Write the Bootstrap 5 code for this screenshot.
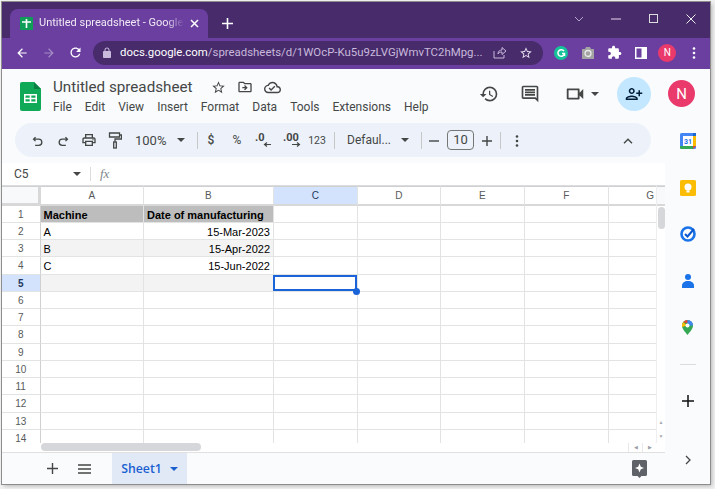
<!DOCTYPE html>
<html lang="en">
<head>
<meta charset="utf-8">
<title>Untitled spreadsheet</title>
<link rel="stylesheet" href="https://cdn.jsdelivr.net/npm/bootstrap@5.3.0/dist/css/bootstrap.min.css">
<style>
html,body{height:100%;margin:0;overflow:hidden;background:#f1f1f1;font-family:"Open Sans","Liberation Sans",sans-serif}
.win{width:708px;height:482px;margin:2px 0 0 2px;box-shadow:0 0 0 1px #8d8d8d,2px 2px 4px rgba(0,0,0,.25);background:#f9fbfd;display:flex;flex-direction:column;overflow:hidden}
.tabstrip{height:36px;flex:none;background:#472b6b;padding:7px 0 0 8px;color:#fff}
.tabx{width:198px;height:29px;background:#6b3fa0;border-radius:8px 8px 0 0;padding:0 9px 0 10px;font-size:12px;color:#efe9f5;white-space:nowrap}
.tabname{width:145px;margin-left:6px;overflow:hidden;font-family:"Roboto",sans-serif;font-size:11px;flex:none;-webkit-mask-image:linear-gradient(90deg,#000 88%,transparent);mask-image:linear-gradient(90deg,#000 88%,transparent)}
.favi{width:13px;height:13px;flex:none}
.newtab{width:38px;height:29px}
.wctls{height:17px}
.wctl{width:37.5px}
.chrome{height:31px;flex:none;background:#6b3fa0;padding:0 0 2px 6px}
.nb{width:27px}
.omni{width:450px;height:24px;margin:0 5px 0 4px;background:#472b6b;border-radius:12px;padding:0 8px;color:#fff;font-family:"Roboto",sans-serif;font-size:11.4px;white-space:nowrap;flex:none}
.omni i{font-style:normal;color:#c9b9dc}
.omtxt{margin-left:7px;flex:none}
.om-share{margin-right:12px}
.om-star{margin-right:2px}
.extb{width:26.5px}
.ava-s{width:18px;height:18px;border-radius:50%;background:#ea3a6c;color:#fff;font:10px "Roboto",sans-serif}
.dochead{height:54px;flex:none;background:#f9fbfd;padding:0 0 0 18px}
.dlogo{width:21px;height:29px;margin-right:12px;flex:none;margin-top:13px}
.dtitle{font:15.2px/20px "Roboto",sans-serif;color:#444746;margin-top:8px;height:20px;white-space:nowrap}
.dtitle svg{margin-left:11px}
.dtitle svg:first-of-type{margin-left:19px}
.dmenu{font:12px/16px "Roboto",sans-serif;color:#444746;gap:13px;margin-top:2px}
.hdr-right{height:49px}
.hr-ic{width:41px}
.hr-vid{width:56px;padding-left:14px}
.hr-caret{margin-left:5px}
.sharec{width:34px;height:34px;border-radius:50%;background:#c2e7ff;margin-left:11px}
.ava-l{width:27px;height:27px;border-radius:50%;background:#ea3a6c;color:#fff;font:15px "Roboto",sans-serif;margin:0 15px 0 17px}
.pillwrap{height:40px;flex:none;padding:0 0 6px 13px}
.pill{width:636px;height:34px;background:#edf2fa;border-radius:17px;padding:0 0 0 9px;color:#444746;font:13px "Roboto",sans-serif;white-space:nowrap}
.tb{width:26px;flex:none;text-align:center}
.tb-n{width:24px}
.tb-s{width:22px;font-size:10.5px}
.tb-sm{font-size:12px}
.tsep{width:1px;height:17px;background:#c7c7c7;flex:none}
.sep-6{margin-left:6px}
.zoombox{width:69px;padding-left:7px}
.fontbox{width:86px;padding-left:12px;font-size:12px}
.caret-in{margin-left:auto;margin-right:12px}
.fsize{width:27px;height:20px;border:1px solid #747775;border-radius:4px;line-height:18px;text-align:center;flex:none;margin-left:1px}
.keb{margin-left:3px}
.chev{margin-left:auto;margin-right:10px}
.caret-d{width:0;height:0;border-left:4px solid transparent;border-right:4px solid transparent;border-top:4px solid #444746;display:inline-block}
.workarea{flex:1;min-height:0}
.maincol{width:663px;flex:none;background:#fff}
.fbar{height:23px;flex:none;background:#fff;border-bottom:1px solid #dadce0;font:12px "Roboto",sans-serif;color:#444746}
.nbox{width:88px;padding:0 9px 0 12px}
.fdiv{width:1px;height:14px;background:#dadce0}
.fxt{font:italic 13px "Liberation Serif",serif;color:#80868b;margin-left:9px}
.gridbox{height:257px;flex:none;position:relative;overflow:hidden}
.sgrid{width:691px;table-layout:fixed;border-collapse:separate;border-spacing:0;font:11px "Liberation Sans",sans-serif;color:#000}
.c0{width:39px}.ca{width:103px}.cb{width:130px}.cc{width:84px}.cd{width:83px}.ce{width:84px}.cf{width:84px}.cg{width:84px}
.sgrid td,.sgrid th{height:17px;padding:1px 3px 0 2.5px;border-right:1px solid #e2e3e3;border-bottom:1px solid #e2e3e3;overflow:hidden;white-space:nowrap;font-weight:400;line-height:14px}
.sgrid td.text-end{padding-right:3px}
.sgrid td.hcell+td.hcell{padding-left:3px}
.sgrid tbody tr:nth-child(4n) td,.sgrid tbody tr:nth-child(4n) th{height:18px}
.sgrid thead th{height:20px;padding-top:0;background:#fff;text-align:center;color:#575a5a;font-size:10px;border-top:1px solid #d0d0d0;border-bottom:2px solid #d8d8d8}
.sgrid tbody th{background:#fff;color:#575a5a;text-align:center;font-size:10px;border-right:1px solid #d0d0d0}
.sgrid thead th.cnr{background:#f8f9fa;border-right:3px solid #d8d8d8;border-bottom:3px solid #d8d8d8}
.sgrid thead th.selh,.sgrid tbody th.selh{background:#d3e3fd;color:#23385c}
.sgrid tbody th.selh{font-weight:700}
.sgrid td.hcell{background:#bdbdbd;font-weight:700}
.sgrid td.rowg{background:#f3f3f3}
.sgrid td.cur{position:relative;overflow:visible}
.curbox{position:absolute;left:-1px;top:0;right:0;bottom:0;border:2px solid #1a63d8}
.fillh{position:absolute;right:-3px;bottom:-4px;width:7px;height:7px;border-radius:50%;background:#1a63d8}
.vscroll{position:absolute;right:0;top:0;bottom:0;width:9px;background:#fff;border-left:1px solid #eee}
.vhead{height:20px;background:#f8f9fa;border-top:1px solid #d0d0d0;border-bottom:2px solid #d8d8d8}
.vthumb{position:absolute;left:1px;top:21px;width:7px;height:22px;background:#d5d7da;border-radius:4px}
.varrow{position:absolute;left:0;width:8px;text-align:center;color:#a8adb3;font-size:5px;line-height:8px}
.va-up{bottom:17px}
.va-dn{bottom:3px}
.hscroll{height:10px;flex:none;background:#fff;border-bottom:1px solid #e0e0e0;padding-left:39px}
.hthumb{width:160px;height:8px;background:#d5d7da;border-radius:4px}
.hbtns{margin-right:9px}
.hbtn{width:14px;text-align:center;font-size:5px;color:#9aa0a6;line-height:8px;border-left:1px solid #e8e8e8}
.sheets{flex:1;background:#f9fbfd;padding-left:34px;color:#444746}
.shic{width:32px}
.shtab{width:75px;background:#e1e9f7;color:#1a5fd0;font:600 12.3px "Open Sans",sans-serif;margin-left:12px}
.sh-caret{border-top-color:#1a5fd0}
.sh-ai{margin-right:18px}
.sbar{width:45px;flex:none;background:#f9fbfd}
.sbtop{margin-top:-45px}
.sbi{height:46.5px;flex:none}
.sbdiv{width:16px;height:1px;background:#dadce0;margin:13px 0 18px}
.sbplus{height:36px;flex:none}
.sbmore{height:48px}
</style>
</head>
<body>
<div class="win">
  <!-- tab strip -->
  <div class="tabstrip d-flex align-items-start">
    <div class="tabx d-flex align-items-center">
      <svg class="favi" viewBox="0 0 13 13"><rect width="13" height="13" rx="1" fill="#0f9d58"/><path d="M2 5h9M6.500 2v9" stroke="#fff" stroke-width="1.600"/></svg>
      <span class="tabname">Untitled spreadsheet - Google Sh</span>
      <svg class="ms-auto" width="9" height="9" viewBox="0 0 9 9"><path d="M1 1l7 7M8 1L1 8" stroke="#fff" stroke-width="1.500"/></svg>
    </div>
    <div class="newtab d-flex align-items-center justify-content-center"><svg width="11" height="11" viewBox="0 0 11 11"><path d="M5.500 0v11M0 5.500h11" stroke="#fff" stroke-width="1.600"/></svg></div>
    <div class="flex-grow-1"></div>
    <div class="wctls d-flex align-items-center">
      <div class="wctl text-center"><svg width="10" height="6" viewBox="0 0 10 6"><path d="M1 1l4 4 4-4" fill="none" stroke="#b7a6cc" stroke-width="1"/></svg></div>
      <div class="wctl text-center"><svg width="10" height="2" viewBox="0 0 10 2"><path d="M0 1h10" stroke="#cbbcd9" stroke-width="1.200"/></svg></div>
      <div class="wctl text-center"><svg width="9" height="10" viewBox="0 0 9 10"><rect x=".5" y=".5" width="8" height="8" fill="none" stroke="#ddd" stroke-width="1"/></svg></div>
      <div class="wctl text-center"><svg width="10" height="10" viewBox="0 0 10 10"><path d="M.5.5l9 9M9.500.5l-9 9" stroke="#eee" stroke-width="1"/></svg></div>
    </div>
  </div>
  <!-- chrome toolbar -->
  <div class="chrome d-flex align-items-center">
    <div class="nb d-flex justify-content-center"><svg width="14" height="14" viewBox="0 0 24 24"><path d="M20 11H7.830l5.590-5.590L12 4l-8 8 8 8 1.410-1.410L7.830 13H20z" fill="#fff"/></svg></div>
    <div class="nb d-flex justify-content-center"><svg width="14" height="14" viewBox="0 0 24 24"><path d="M4 11h12.170l-5.590-5.590L12 4l8 8-8 8-1.410-1.410L16.170 13H4z" fill="#a58cc4"/></svg></div>
    <div class="nb d-flex justify-content-center"><svg width="15" height="15" viewBox="0 0 24 24"><path d="M17.650 6.350C16.200 4.900 14.210 4 12 4c-4.420 0-7.990 3.580-7.990 8s3.570 8 7.990 8c3.730 0 6.840-2.550 7.730-6h-2.080c-.82 2.330-3.040 4-5.650 4-3.310 0-6-2.690-6-6s2.690-6 6-6c1.660 0 3.140.69 4.220 1.780L13 11h7V4l-2.350 2.350z" fill="#fff"/></svg></div>
    <div class="omni d-flex align-items-center">
      <svg width="12" height="12" viewBox="0 0 24 24"><path d="M18 8h-1V6c0-2.760-2.240-5-5-5S7 3.240 7 6v2H6c-1.100 0-2 .9-2 2v10c0 1.100.9 2 2 2h12c1.100 0 2-.9 2-2V10c0-1.100-.9-2-2-2zM9 6c0-1.660 1.340-3 3-3s3 1.340 3 3v2H9V6z" fill="#c9b9dc"/></svg>
      <span class="omtxt">docs.google.com<i>/spreadsheets/d/1WOcP-Ku5u9zLVGjWmvTC2hMpg...</i></span>
      <svg class="ms-auto om-share" width="14" height="13" viewBox="0 0 14 13"><path d="M1 5v7h10V9M5 8c0-3 2-4 4-4V1.500l4 3.500-4 3.500V6C7 6 6 6.500 5 8z" fill="none" stroke="#c9b9dc" stroke-width="1"/></svg>
      <svg class="om-star" width="14" height="14" viewBox="0 0 24 24"><path d="M22 9.240l-7.190-.62L12 2 9.190 8.630 2 9.240l5.460 4.730L5.820 21 12 17.270 18.180 21l-1.630-7.030L22 9.240zM12 15.400l-3.760 2.270 1-4.280-3.320-2.880 4.380-.38L12 6.100l1.710 4.040 4.380.38-3.320 2.880 1 4.280L12 15.400z" fill="#e4dcee"/></svg>
    </div>
    <div class="extb d-flex justify-content-center"><svg width="14" height="14" viewBox="0 0 14 14"><circle cx="7" cy="7" r="7" fill="#15c39a"/><path d="M10 5.200A3.300 3.300 0 1 0 10.200 8.500M8 7.500h2.500v2.500" fill="none" stroke="#fff" stroke-width="1.500"/></svg></div>
    <div class="extb d-flex justify-content-center"><svg width="14" height="13" viewBox="0 0 14 13"><path d="M1 3h3l1-2h4l1 2h3v10H1z" fill="#a3a3a3"/><circle cx="7" cy="7.500" r="3" fill="none" stroke="#e8e8e8" stroke-width="1.300"/></svg></div>
    <div class="extb d-flex justify-content-center"><svg width="15" height="15" viewBox="0 0 24 24"><path d="M20.500 11H19V7c0-1.100-.9-2-2-2h-4V3.500C13 2.120 11.880 1 10.500 1S8 2.120 8 3.500V5H4c-1.100 0-1.990.9-1.990 2v3.800H3.500c1.490 0 2.700 1.210 2.700 2.700s-1.210 2.700-2.700 2.700H2V20c0 1.100.9 2 2 2h3.800v-1.500c0-1.490 1.210-2.700 2.700-2.700 1.490 0 2.700 1.210 2.700 2.700V22H17c1.100 0 2-.9 2-2v-4h1.500c1.380 0 2.500-1.120 2.500-2.500S21.880 11 20.500 11z" fill="#fff"/></svg></div>
    <div class="extb d-flex justify-content-center"><svg width="12" height="12" viewBox="0 0 12 12"><rect width="12" height="12" fill="#fff"/><rect x="1.500" y="1.500" width="5" height="9" fill="#6b3fa0"/></svg></div>
    <div class="extb d-flex justify-content-center"><div class="ava-s d-flex align-items-center justify-content-center">N</div></div>
    <div class="extb d-flex justify-content-center"><svg width="4" height="12" viewBox="0 0 4 12"><circle cx="2" cy="1.500" r="1.300" fill="#fff"/><circle cx="2" cy="6" r="1.300" fill="#fff"/><circle cx="2" cy="10.500" r="1.300" fill="#fff"/></svg></div>
  </div>
  <!-- doc header -->
  <div class="dochead d-flex align-items-start">
    <svg class="dlogo" viewBox="0 0 21 29"><path d="M2 0h12l7 7v20a2 2 0 0 1-2 2H2a2 2 0 0 1-2-2V2a2 2 0 0 1 2-2z" fill="#0fa958"/><path d="M14 0l7 7h-7z" fill="#0b8043"/><path d="M4 12h13v9H4zm1.500 1.500v2.200h4.200v-2.200zm5.800 0v2.200h4.200v-2.200zm-5.800 3.700v2.300h4.200v-2.300zm5.800 0v2.300h4.200v-2.300z" fill="#fff" fill-rule="evenodd"/></svg>
    <div>
      <div class="dtitle d-flex align-items-center">Untitled spreadsheet
        <svg width="15" height="15" viewBox="0 0 24 24"><path d="M22 9.240l-7.190-.62L12 2 9.190 8.630 2 9.240l5.460 4.730L5.820 21 12 17.270 18.180 21l-1.630-7.030L22 9.240zM12 15.400l-3.760 2.270 1-4.280-3.320-2.880 4.380-.38L12 6.100l1.710 4.040 4.380.38-3.320 2.880 1 4.280L12 15.400z" fill="#444746"/></svg>
        <svg width="16" height="16" viewBox="0 0 24 24"><path d="M20 6h-8l-2-2H4c-1.100 0-2 .9-2 2v12c0 1.100.9 2 2 2h16c1.100 0 2-.9 2-2V8c0-1.100-.9-2-2-2zm0 12H4V6h5.170l2 2H20v10zm-8.010-9l-1.410 1.410L12.160 12H8v2h4.160l-1.590 1.590L11.990 17 16 13.010 11.990 9z" fill="#444746"/></svg>
        <svg width="17" height="17" viewBox="0 0 24 24"><path d="M19.350 10.040C18.670 6.590 15.640 4 12 4 9.110 4 6.600 5.640 5.350 8.040 2.340 8.360 0 10.910 0 14c0 3.310 2.690 6 6 6h13c2.760 0 5-2.240 5-5 0-2.640-2.050-4.780-4.650-4.960zM19 18H6c-2.210 0-4-1.790-4-4 0-2.050 1.530-3.760 3.560-3.970l1.070-.11.5-.95C8.080 7.140 9.940 6 12 6c2.620 0 4.880 1.860 5.390 4.430l.3 1.500 1.530.11c1.560.1 2.780 1.410 2.780 2.960 0 1.650-1.350 3-3 3zm-9-3.820l-2.090-2.090L6.500 13.500 10 17l6.010-6.010-1.410-1.410z" fill="#444746"/></svg>
      </div>
      <div class="dmenu d-flex"><span>File</span><span>Edit</span><span>View</span><span>Insert</span><span>Format</span><span>Data</span><span>Tools</span><span>Extensions</span><span>Help</span></div>
    </div>
    <div class="ms-auto d-flex align-items-center hdr-right">
      <div class="hr-ic d-flex justify-content-center"><svg width="20" height="20" viewBox="0 0 24 24"><path d="M13 3a9 9 0 0 0-9 9H1l3.890 3.890.07.14L9 12H6c0-3.870 3.130-7 7-7s7 3.130 7 7-3.130 7-7 7c-1.930 0-3.680-.79-4.940-2.060l-1.420 1.420A8.954 8.954 0 0 0 13 21a9 9 0 0 0 0-18zm-1 5v5l4.280 2.540.72-1.210-3.500-2.080V8H12z" fill="#444746"/></svg></div>
      <div class="hr-ic d-flex justify-content-center"><svg width="20" height="20" viewBox="0 0 24 24"><path d="M21.990 4c0-1.100-.89-2-1.990-2H4c-1.100 0-2 .9-2 2v12c0 1.100.9 2 2 2h14l4 4-.01-18zM20 4v13.170L18.830 16H4V4h16zM6 12h12v2H6zm0-3h12v2H6zm0-3h12v2H6z" fill="#444746"/></svg></div>
      <div class="hr-vid d-flex align-items-center"><svg width="22" height="22" viewBox="0 0 24 24"><path d="M15 8v8H5V8h10m1-2H4c-.55 0-1 .45-1 1v10c0 .55.45 1 1 1h12c.55 0 1-.45 1-1v-3.500l4 4v-11l-4 4V7c0-.55-.45-1-1-1z" fill="#444746"/></svg><span class="caret-d hr-caret"></span></div>
      <div class="sharec d-flex align-items-center justify-content-center"><svg width="18" height="18" viewBox="0 0 24 24"><path transform="matrix(-1 0 0 1 24 0)" d="M15 12c2.210 0 4-1.790 4-4s-1.790-4-4-4-4 1.790-4 4 1.790 4 4 4zm0-6c1.100 0 2 .9 2 2s-.9 2-2 2-2-.9-2-2 .9-2 2-2zM6 10V7H4v3H1v2h3v3h2v-3h3v-2H6zm9 4c-2.670 0-8 1.340-8 4v2h16v-2c0-2.660-5.330-4-8-4zm-6 4c.22-.72 3.310-2 6-2s5.800 1.290 6 2H9z" fill="#001d35"/></svg></div>
      <div class="ava-l d-flex align-items-center justify-content-center">N</div>
    </div>
  </div>
  <!-- format toolbar -->
  <div class="pillwrap">
    <div class="pill d-flex align-items-center">
      <div class="tb"><svg width="11" height="11" viewBox="0 0 14 14"><path d="M4.500 1.500L2 4l2.500 2.500M2 4h6.500a3.500 3.500 0 0 1 0 8H4" fill="none" stroke="#444746" stroke-width="1.700"/></svg></div>
      <div class="tb"><svg width="11" height="11" viewBox="0 0 14 14"><path d="M9.500 1.500L12 4 9.500 6.500M12 4H5.500a3.500 3.500 0 0 0 0 8H10" fill="none" stroke="#444746" stroke-width="1.700"/></svg></div>
      <div class="tb"><svg width="16" height="16" viewBox="0 0 24 24"><path d="M19 8h-1V3H6v5H5c-1.660 0-3 1.340-3 3v6h4v4h12v-4h4v-6c0-1.660-1.340-3-3-3zM8 5h8v3H8V5zm8 12v2H8v-4h8v2zm2-2v-2H6v2H4v-4c0-.55.45-1 1-1h14c.55 0 1 .45 1 1v4h-2z" fill="#444746"/><circle cx="18" cy="11.500" r="1" fill="#444746"/></svg></div>
      <div class="tb"><svg width="14" height="17" viewBox="0 0 14 17"><path d="M1.500 1h10v4h-10zM11.500 3h2v4H7v3" fill="none" stroke="#444746" stroke-width="1.300"/><rect x="5.700" y="10" width="2.600" height="6" fill="none" stroke="#444746" stroke-width="1.300"/></svg></div>
      <div class="zoombox d-flex align-items-center">100%<span class="caret-d caret-in"></span></div>
      <div class="tsep"></div>
      <div class="tb tb-sm fw-medium">$</div>
      <div class="tb tb-sm">%</div>
      <div class="tb"><svg width="18" height="16" viewBox="0 0 18 16"><text x="1" y="9" font-size="11" font-weight="700" font-family="Roboto" fill="#444746">.0</text><path d="M17 12.500h-6M13 10.500l-2.500 2 2.500 2" fill="none" stroke="#444746" stroke-width="1.200"/></svg></div>
      <div class="tb ms-1"><svg width="22" height="16" viewBox="0 0 22 16"><text x="1" y="9" font-size="11" font-weight="700" font-family="Roboto" fill="#444746">.00</text><path d="M10 12.500h7M15 10.500l2.500 2-2.500 2" fill="none" stroke="#444746" stroke-width="1.200"/></svg></div>
      <div class="tb tb-s">123</div>
      <div class="tsep sep-6"></div>
      <div class="fontbox d-flex align-items-center">Defaul...<span class="caret-d caret-in"></span></div>
      <div class="tsep"></div>
      <div class="tb tb-n"><svg width="10" height="2" viewBox="0 0 10 2"><path d="M0 1h10" stroke="#444746" stroke-width="1.400"/></svg></div>
      <div class="fsize">10</div>
      <div class="tb"><svg width="10" height="10" viewBox="0 0 10 10"><path d="M0 5h10M5 0v10" stroke="#444746" stroke-width="1.400"/></svg></div>
      <div class="tsep"></div>
      <div class="tb keb"><svg width="4" height="12" viewBox="0 0 4 12"><circle cx="2" cy="1.500" r="1.300" fill="#444746"/><circle cx="2" cy="6" r="1.300" fill="#444746"/><circle cx="2" cy="10.500" r="1.300" fill="#444746"/></svg></div>
      <div class="tb chev"><svg width="10" height="6" viewBox="0 0 10 6"><path d="M1 5.300l4-4 4 4" fill="none" stroke="#444746" stroke-width="1.400"/></svg></div>
    </div>
  </div>
  <div class="workarea d-flex">
    <div class="maincol d-flex flex-column">
      <div class="fbar d-flex align-items-center">
        <div class="nbox d-flex align-items-center"><span>C5</span><span class="caret-d ms-auto"></span></div>
        <div class="fdiv"></div>
        <span class="fxt">fx</span>
      </div>
      <div class="gridbox">
        <table class="sgrid">
          <colgroup><col class="c0"><col class="ca"><col class="cb"><col class="cc"><col class="cd"><col class="ce"><col class="cf"><col class="cg"></colgroup>
          <thead><tr><th class="cnr"></th><th>A</th><th>B</th><th class="selh">C</th><th>D</th><th>E</th><th>F</th><th>G</th></tr></thead>
          <tbody>
            <tr><th>1</th><td class="hcell">Machine</td><td class="hcell">Date of manufacturing</td><td></td><td></td><td></td><td></td><td></td></tr>
            <tr><th>2</th><td>A</td><td class="text-end">15-Mar-2023</td><td></td><td></td><td></td><td></td><td></td></tr>
            <tr><th>3</th><td class="rowg">B</td><td class="text-end rowg">15-Apr-2022</td><td></td><td></td><td></td><td></td><td></td></tr>
            <tr><th>4</th><td>C</td><td class="text-end">15-Jun-2022</td><td></td><td></td><td></td><td></td><td></td></tr>
            <tr><th class="selh">5</th><td class="rowg"></td><td class="rowg"></td><td class="cur"><span class="curbox"></span><span class="fillh"></span></td><td></td><td></td><td></td><td></td></tr>
            <tr><th>6</th><td></td><td></td><td></td><td></td><td></td><td></td><td></td></tr>
            <tr><th>7</th><td></td><td></td><td></td><td></td><td></td><td></td><td></td></tr>
            <tr><th>8</th><td></td><td></td><td></td><td></td><td></td><td></td><td></td></tr>
            <tr><th>9</th><td></td><td></td><td></td><td></td><td></td><td></td><td></td></tr>
            <tr><th>10</th><td></td><td></td><td></td><td></td><td></td><td></td><td></td></tr>
            <tr><th>11</th><td></td><td></td><td></td><td></td><td></td><td></td><td></td></tr>
            <tr><th>12</th><td></td><td></td><td></td><td></td><td></td><td></td><td></td></tr>
            <tr><th>13</th><td></td><td></td><td></td><td></td><td></td><td></td><td></td></tr>
            <tr><th>14</th><td></td><td></td><td></td><td></td><td></td><td></td><td></td></tr>
          </tbody>
        </table>
        <div class="vscroll"><div class="vhead"></div><div class="vthumb"></div><div class="varrow va-up">&#9650;</div><div class="varrow va-dn">&#9660;</div></div>
      </div>
      <div class="hscroll d-flex"><div class="hthumb"></div><div class="ms-auto d-flex hbtns"><div class="hbtn">&#9664;</div><div class="hbtn">&#9654;</div></div></div>
      <div class="sheets d-flex align-items-stretch">
        <div class="shic d-flex align-items-center justify-content-center"><svg width="11" height="11" viewBox="0 0 11 11"><path d="M0 5.500h11M5.500 0v11" stroke="#444746" stroke-width="1.400"/></svg></div>
        <div class="shic d-flex align-items-center justify-content-center"><svg width="13" height="10" viewBox="0 0 13 10"><path d="M0 1h13M0 5h13M0 9h13" stroke="#444746" stroke-width="1.500"/></svg></div>
        <div class="shtab d-flex align-items-center justify-content-center">Sheet1<span class="caret-d ms-2 sh-caret"></span></div>
        <div class="ms-auto d-flex align-items-center sh-ai"><svg width="15" height="18" viewBox="0 0 15 18"><path d="M1.500 0h12A1.500 1.500 0 0 1 15 1.500v13a1.500 1.500 0 0 1-1.500 1.500H9.500l-2 2-2-2h-4A1.500 1.500 0 0 1 0 14.500v-13A1.500 1.500 0 0 1 1.500 0z" fill="#5f6368"/><path d="M7.500 3.500l1.300 3.200 3.200 1.300-3.200 1.300-1.300 3.200-1.300-3.200L3 8l3.200-1.300z" fill="#fff"/></svg></div>
      </div>
    </div>
    <div class="sbar d-flex flex-column align-items-center">
      <div class="sbi sbtop d-flex align-items-center justify-content-center"><svg width="16" height="16" viewBox="0 0 16 16"><rect width="16" height="16" rx="1.500" fill="#4285f4"/><rect x="3" y="3" width="10" height="10" fill="#fff"/><path d="M13 0h3v3h-3z" fill="#1967d2"/><path d="M0 13h13v3H1.500A1.500 1.500 0 0 1 0 14.500z" fill="#34a853"/><path d="M13 3h3v10h-3z" fill="#fbbc04"/><path d="M13 13h3l-3 3z" fill="#ea4335"/><text x="8" y="11" font-size="7" font-family="Roboto" font-weight="700" text-anchor="middle" fill="#1a73e8">31</text></svg></div>
      <div class="sbi d-flex align-items-center justify-content-center"><svg width="16" height="16" viewBox="0 0 16 16"><rect width="16" height="16" rx="1.500" fill="#fbbc04"/><circle cx="8" cy="7" r="3.500" fill="#fff"/><rect x="6.500" y="10.500" width="3" height="2" fill="#fff"/></svg></div>
      <div class="sbi d-flex align-items-center justify-content-center"><svg width="16" height="16" viewBox="0 0 16 16"><circle cx="8" cy="8" r="6.500" fill="none" stroke="#1a73e8" stroke-width="2.600"/><path d="M5 8l2.500 2.500L14 3" fill="none" stroke="#0b57d0" stroke-width="2"/></svg></div>
      <div class="sbi d-flex align-items-center justify-content-center"><svg width="12" height="14" viewBox="0 0 12 14"><circle cx="6" cy="3" r="3" fill="#1a73e8"/><path d="M0 14v-2.500C0 9 2.500 7 6 7s6 2 6 4.500V14z" fill="#1a73e8"/></svg></div>
      <div class="sbi d-flex align-items-center justify-content-center"><svg width="11" height="15" viewBox="0 0 11 15"><path d="M5.500 15C3 11.500 0 9 0 5.500a5.500 5.500 0 0 1 11 0C11 9 8 11.500 5.500 15z" fill="#34a853"/><path d="M1.300 2L5 5.500 0 7C-.2 5 .3 3 1.300 2z" fill="#fbbc04"/><path d="M1.300 2A5.500 5.500 0 0 1 5.500 0v3.500z" fill="#ea4335"/><path d="M5.500 0A5.500 5.500 0 0 1 11 5.500H5.500z" fill="#4285f4"/><circle cx="5.500" cy="5.500" r="2" fill="#fff"/></svg></div>
      <div class="sbdiv"></div>
      <div class="sbplus d-flex align-items-center justify-content-center"><svg width="12" height="12" viewBox="0 0 12 12"><path d="M0 6h12M6 0v12" stroke="#111" stroke-width="1.500"/></svg></div>
      <div class="mt-auto sbmore d-flex align-items-center justify-content-center"><svg width="6" height="10" viewBox="0 0 6 10"><path d="M1 1l4 4-4 4" fill="none" stroke="#444746" stroke-width="1.300"/></svg></div>
    </div>
  </div>
</div>
<script src="https://cdn.jsdelivr.net/npm/bootstrap@5.3.0/dist/js/bootstrap.bundle.min.js"></script>
</body>
</html>
